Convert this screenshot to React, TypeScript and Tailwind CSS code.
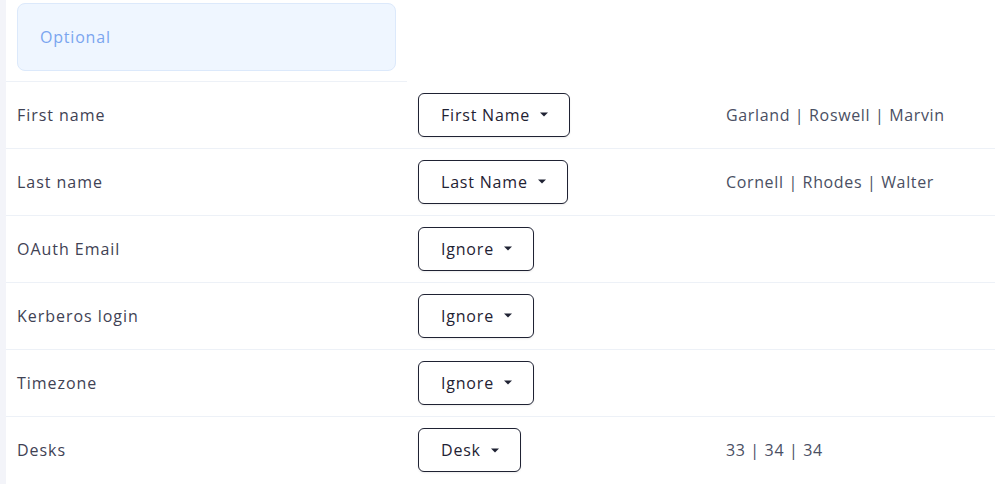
const rows = [
  { label: 'First name', pick: 'First Name', sample: 'Garland | Roswell | Marvin' },
  { label: 'Last name', pick: 'Last Name', sample: 'Cornell | Rhodes | Walter' },
  { label: 'OAuth Email', pick: 'Ignore', sample: '' },
  { label: 'Kerberos login', pick: 'Ignore', sample: '' },
  { label: 'Timezone', pick: 'Ignore', sample: '' },
  { label: 'Desks', pick: 'Desk', sample: '33 | 34 | 34' },
];

function Caret() {
  return (
    <svg width="8" height="5" viewBox="0 0 8 5" className="ml-[10px]">
      <path d="M0 0.5h8L4 4.5z" fill="#1f2233" />
    </svg>
  );
}

export default function App() {
  return (
    <div
      className="flex min-h-[484px] bg-white text-[16px] tracking-[0.05em] text-[#3f4254]"
      style={{ fontFamily: '"Open Sans", "Noto Sans", sans-serif' }}
    >
      <div className="w-[6px] shrink-0 bg-[#f3f4f9]" />
      <div className="flex-1">
        {/* header */}
        <div className="flex">
          <div className="w-[401px] border-b border-[#edf1f7] px-[11px] pt-[3px] pb-[10px]">
            <div className="flex h-[68px] items-center rounded-lg border border-[#dce9fb] bg-[#eff6ff] pl-[22px] text-[#7aa5ef]">
              Optional
            </div>
          </div>
        </div>

        {rows.map((r) => (
          <div key={r.label} className="flex h-[67px] items-center border-b border-[#edf1f7] pb-[1px] last:border-b-0">
            <div className="w-[401px] px-[11px] tracking-[0.06em]">{r.label}</div>
            <div className="w-[308px] px-[11px]">
              <button className="flex h-[44px] items-center rounded-md border border-[#1f2233] bg-white pl-[22px] pr-[21px] text-[#1f2233] shadow-[0_1px_2px_rgba(0,0,0,0.08)]">
                {r.pick}
                <Caret />
              </button>
            </div>
            <div className="flex-1 px-[11px] tracking-[0.04em] text-[#4a4f63]">{r.sample}</div>
          </div>
        ))}
      </div>
    </div>
  );
}
